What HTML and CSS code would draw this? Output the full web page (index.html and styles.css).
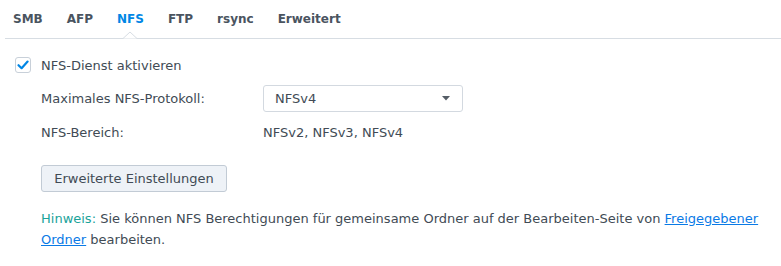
FILE: index.html
```html
<!DOCTYPE html>
<html lang="de">
<head>
<meta charset="utf-8">
<title>NFS</title>
<link rel="stylesheet" href="styles.css">
</head>
<body>
<div class="tabbar">
  <div class="tab">SMB</div>
  <div class="tab">AFP</div>
  <div class="tab active">NFS<svg class="caret" width="14" height="8" viewBox="0 0 14 8"><path d="M0 7.5 L7 1 L14 7.5" fill="#fff" stroke="#d7dde3" stroke-width="1"/></svg></div>
  <div class="tab">FTP</div>
  <div class="tab">rsync</div>
  <div class="tab">Erweitert</div>
</div>
<div class="content">
  <label class="check-row">
    <span class="checkbox"><svg width="14" height="14" viewBox="0 0 14 14"><path d="M2.5 7.2 L5.6 10.2 L11.6 3.6" fill="none" stroke="#0086e5" stroke-width="2.2" stroke-linecap="round" stroke-linejoin="round"/></svg></span>
    <span>NFS-Dienst aktivieren</span>
  </label>
  <div class="field-row select-row">
    <span class="label">Maximales NFS-Protokoll:</span>
    <div class="select"><span>NFSv4</span><svg width="8" height="5" viewBox="0 0 8 5"><path d="M0 0 H8 L4 4.5 Z" fill="#555d66"/></svg></div>
  </div>
  <div class="field-row value-row">
    <span class="label">NFS-Bereich:</span>
    <span class="value">NFSv2, NFSv3, NFSv4</span>
  </div>
  <button class="btn">Erweiterte Einstellungen</button>
  <p class="hint"><span class="hint-label">Hinweis:</span> Sie können NFS Berechtigungen für gemeinsame Ordner auf der Bearbeiten-Seite von <a href="#">Freigegebener Ordner</a> bearbeiten.</p>
</div>
</body>
</html>
```
FILE: styles.css
```css
html, body {
  margin: 0;
  padding: 0;
  background: #fff;
}
body {
  font-family: "DejaVu Sans", Verdana, sans-serif;
  font-size: 13px;
  color: #414b55;
}
.tabbar {
  display: flex;
  height: 38px;
  margin-left: 5px;
  border-bottom: 1px solid #d7dde3;
}
.tab {
  position: relative;
  padding: 0 12px;
  height: 38px;
  line-height: 38px;
  font-weight: bold;
  font-size: 12px;
  color: #4a5460;
}
.tab:first-child { padding-left: 8px; }
.tab.active { color: #0086e5; }
.caret {
  position: absolute;
  left: 50%;
  margin-left: -7px;
  bottom: -1px;
}
.content {
  padding: 0 0 0 15px;
}
.check-row {
  display: flex;
  align-items: center;
  gap: 10px;
  height: 20px;
  margin-top: 16px;
}
.checkbox {
  width: 14px;
  height: 14px;
  border: 1px solid #c8d0d9;
  border-radius: 3px;
  display: flex;
  align-items: center;
  justify-content: center;
  background: #fff;
}
.field-row {
  display: flex;
  align-items: center;
  padding-left: 26px;
}
.label {
  width: 222px;
}
.select-row {
  margin-top: 10px;
  height: 27px;
}
.select {
  box-sizing: border-box;
  width: 200px;
  height: 27px;
  border: 1px solid #d3d9e0;
  border-radius: 3px;
  display: flex;
  align-items: center;
  justify-content: space-between;
  padding: 0 12px 0 11px;
}
.value-row {
  margin-top: 6px;
  height: 28px;
}
.btn {
  display: block;
  margin: 19px 0 0 26px;
  box-sizing: border-box;
  width: 186px;
  height: 27px;
  font-family: inherit;
  font-size: 13px;
  color: #414b55;
  background: #eef2f7;
  border: 1px solid #c2cbd5;
  border-radius: 3px;
  padding: 0;
}
.hint {
  margin: 16px 0 0 26px;
  width: 730px;
  line-height: 21px;
}
.hint-label { color: #1aa39a; }
.hint a { color: #0a7ae6; text-decoration: underline; }
```
